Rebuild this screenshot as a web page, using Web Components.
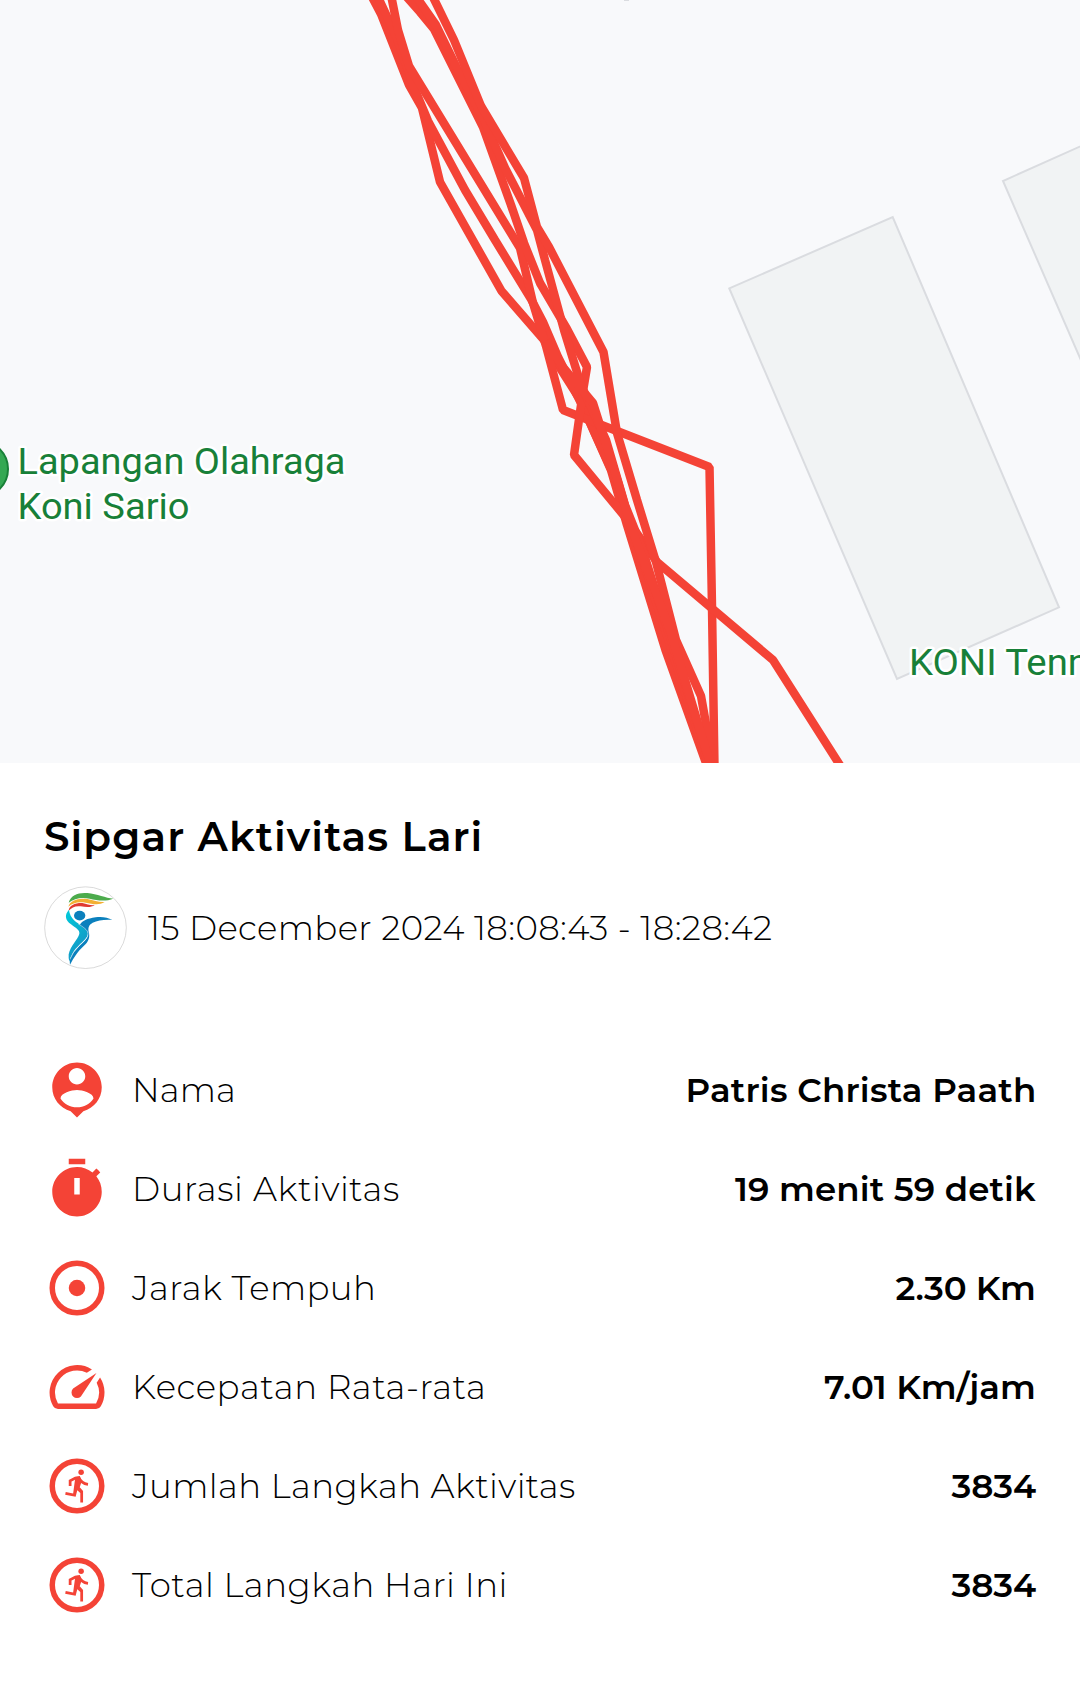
<!DOCTYPE html>
<html lang="id">
<head>
<meta charset="utf-8">
<title>Sipgar Aktivitas Lari</title>
<style>
	body{
		margin: 0;
		background: #fff;
		color: #000;
		font-family: Montserrat, Inter, "Open Sans", sans-serif;
	}
</style>
</head>
<body>
<activity-page></activity-page>

<script>
// One line of text, tracked out to a given ink width
const templateFitText = document.createElement('template');
templateFitText.innerHTML = `
	<style>
		:host{
			display: block;
			flex: none;
			white-space: nowrap;
		}
		span{
			display: inline-block;
		}
	</style>
<span></span>
`;

class FitText extends HTMLElement{
	constructor(){
		super();
		this.attachShadow({mode: 'open'});
		this.shadowRoot.appendChild(templateFitText.content.cloneNode(true));
	}

	connectedCallback(){
		const text = this.getAttribute('text');
		const width = Number(this.getAttribute('width'));
		const span = this.shadowRoot.querySelector('span');
		span.textContent = text;
		const style = getComputedStyle(this);
		const ctx = document.createElement('canvas').getContext('2d');
		ctx.font = `${style.fontWeight} ${style.fontSize} ${style.fontFamily}`;
		const box = ctx.measureText(text);
		const ink = box.actualBoundingBoxLeft + box.actualBoundingBoxRight;
		this.style.width = width + 'px';
		span.style.letterSpacing = (width - ink) / (text.length - 1) + 'px';
		span.style.marginLeft = box.actualBoundingBoxLeft + 'px';
	}
}

window.customElements.define('fit-text', FitText);


const templateRouteMap = document.createElement('template');
templateRouteMap.innerHTML = `
	<style>
		:host{
			display: block;
			height: 763px;
			background: #f8f9fb;
			overflow: hidden;
		}
		svg{
			display: block;
		}
		.building{
			fill: #f1f3f4;
			stroke: #dadce0;
			stroke-width: 2;
		}
		.route{
			fill: none;
			stroke: #f44336;
			stroke-width: 8.5;
			stroke-linejoin: bevel;
		}
		text{
			font: 37.3px Roboto, sans-serif;
			fill: #188038;
			stroke: #fff;
			stroke-width: 5;
			stroke-linejoin: round;
			paint-order: stroke;
		}
	</style>
<svg width="1080" height="763" viewBox="0 0 1080 763">
	<g class="building">
		<path d="M729.3 288.4 892.7 217 1059 607.3 897 679z"/>
		<path d="M1090 142 1003 181 1090 381"/>
	</g>
	<path d="M624 0h5" stroke="#dadce0" stroke-width="2"/>
	<g class="route">
		<path d="M371 -5 381 14 409 85 422 108 440 182 501.5 291 544 340 560 368 579 398 611 470 627 525 665.5 650 706 763"/>
		<path d="M377 -5 397 38 413 85 428 121 465 190 495 240 531 299 543 322 558 357 582 405 616 480 631 524 670 645 708 763"/>
		<path d="M391 -5 398 30 409 66 520 248 533 303 546 346 563 410 709.5 467 712 607 714.5 768"/>
		<path d="M405 -5 420 12 434 29 483 127 511 205 524 243 540 283 567 329 587 367 583 391 574 455 626 518 657 562 773 660 843 770"/>
		<path d="M415 -5 436 25 458 70 484 120 505 168 537 230 545 260 564 330 581 385 606 440 625 505 641 545 671 640 710 763"/>
		<path d="M432 -5 454 40 481 106 524 178 537 227 549 247 603.5 352 617 433 637 500 656 562 676 640 701 696 713 763"/>
		<path d="M546 341 562 366 593 403 618 482 632 530 670 630 706 750 711 763"/>
	</g>
	<circle cx="-20" cy="469" r="28" fill="#34a853" stroke="#188038" stroke-width="2"/>
	<text x="17.500" y="473.5" textLength="328" lengthAdjust="spacingAndGlyphs">Lapangan Olahraga</text>
	<text x="17.500" y="518.5" textLength="172" lengthAdjust="spacingAndGlyphs">Koni Sario</text>
	<text x="909" y="675" textLength="180" lengthAdjust="spacingAndGlyphs">KONI Tenn</text>
</svg>
`;

class RouteMap extends HTMLElement{
	constructor(){
		super();
		this.attachShadow({mode: 'open'});
		this.shadowRoot.appendChild(templateRouteMap.content.cloneNode(true));
	}
}

window.customElements.define('route-map', RouteMap);


const templateSipgarLogo = document.createElement('template');
templateSipgarLogo.innerHTML = `
	<style>
		:host{
			display: block;
			width: 83px;
			height: 83px;
		}
		svg{
			display: block;
		}
	</style>
<svg width="83" height="83" viewBox="5 5 249 249">
	<defs>
		<linearGradient id="cyan" x1="0" y1="0" x2=".5" y2="1">
			<stop offset="0" stop-color="#00cbdc"/>
			<stop offset=".45" stop-color="#08b3cf"/>
			<stop offset="1" stop-color="#1593c6"/>
		</linearGradient>
	</defs>
	<circle cx="129.500" cy="130" r="122.500" fill="#fff" stroke="#b4b4b4" stroke-width="1.500"/>
	<path fill="#4cab4c" d="M79 55C86 31 108 24 135 26C165 29 190 41 213 43C191 52 165 49 142 43C117 38 96 42 79 55z"/>
	<path fill="#f3b033" d="M78 67C83 48 108 40 135 44C155 49 170 54 187 53C170 64 150 59 130 55C108 51 90 56 78 67z"/>
	<path fill="#e03a31" d="M79 79C80 63 100 55 120 56C135 59 145 64 157 62C145 71 130 68 115 66C98 64 88 70 79 79z"/>
	<path fill="url(#cyan)" d="M80 76C66 91 68 107 86 120C102 132 113 138 111 148C107 166 84 183 79 210Q78 222 81 232C86 212 94 198 108 185C123 170 138 160 137 147C135 134 121 128 107 117C91 105 82 94 80 76z"/>
	<path fill="#0b80bd" d="M112 122C120 109 134 103 160 99C180 96 196 100 210 107C186 105 166 109 151 115C139 122 137 130 139 142C144 159 138 173 124 185C105 203 96 218 83 241C80 222 90 206 106 190C126 171 139 161 137 147C133 136 122 130 112 122z"/>
	<path fill="none" stroke="#fff" stroke-width="1.500" d="M107 118C122 128 136 136 137 147C138 161 124 171 107 188Q92 203 84 223"/>
	<ellipse cx="112" cy="94" rx="17" ry="14.500" fill="#0b80bd"/>
</svg>
`;

class SipgarLogo extends HTMLElement{
	constructor(){
		super();
		this.attachShadow({mode: 'open'});
		this.shadowRoot.appendChild(templateSipgarLogo.content.cloneNode(true));
	}
}

window.customElements.define('sipgar-logo', SipgarLogo);


const icons = {
	person: '<path d="M12 2c-4.970 0-9 4.030-9 9 0 4.170 2.840 7.670 6.690 8.690L12 22l2.310-2.310C18.160 18.670 21 15.170 21 11c0-4.970-4.030-9-9-9zm0 2c1.660 0 3 1.340 3 3s-1.340 3-3 3-3-1.340-3-3 1.340-3 3-3zm0 14.300c-2.500 0-4.710-1.280-6-3.220.030-1.990 4-3.080 6-3.080 1.990 0 5.970 1.090 6 3.080-1.290 1.940-3.500 3.220-6 3.220z"/>',
	timer: '<path d="M15 1H9v2h6V1zm4.030 6.390 1.420-1.420c-.430-.510-.9-.990-1.410-1.410l-1.420 1.420C16.070 4.740 14.120 4 12 4c-4.970 0-9 4.030-9 9s4.020 9 9 9 9-4.030 9-9c0-2.120-.740-4.070-1.970-5.610zM13 14h-2V8h2v6z"/>',
	distance: '<circle cx="12" cy="12" r="9" fill="none" stroke="currentColor" stroke-width="2"/><circle cx="12" cy="12" r="3"/>',
	speed: '<path d="m20.380 8.570-1.230 1.850a8 8 0 0 1-.220 7.580H5.070A8 8 0 0 1 15.580 6.850l1.850-1.230A10 10 0 0 0 3.350 19a2 2 0 0 0 1.720 1h13.850a2 2 0 0 0 1.740-1 10 10 0 0 0-.270-10.440zm-9.790 6.840a2 2 0 0 0 2.830 0l5.660-8.490-8.490 5.660a2 2 0 0 0 0 2.830z"/>',
	run: '<circle cx="12" cy="12" r="9" fill="none" stroke="currentColor" stroke-width="2"/><circle cx="13.500" cy="7" r="1"/><path d="M9.500 12V10.100L11.400 9.100 12.700 8.900Q13.500 11.100 16 11.400" fill="none" stroke="currentColor" stroke-width="1"/><path d="m11.400 8.750 1.600-.1.700 1.600-.7 2.200 1.200 1.400V18h-1v-3.500l-1.100-1-.6 2.400-3.800-.7.200-1 2.700.5z"/>'
};

const templateStatRow = document.createElement('template');
templateStatRow.innerHTML = `
	<style>
		:host{
			display: flex;
			align-items: center;
			height: 99px;
			font-size: 34px;
		}
		svg{
			flex: none;
			width: 66px;
			height: 66px;
			color: #f44336;
			fill: currentColor;
		}
		.label{
			margin-left: var(--label-gap, 26px);
			font-weight: 340;
		}
		.value{
			margin-left: auto;
			margin-right: var(--value-gap, 2px);
			font-weight: 570;
		}
	</style>
<svg viewBox="0 0 24 24"></svg>
<fit-text class="label"></fit-text>
<fit-text class="value"></fit-text>
`;

class StatRow extends HTMLElement{
	constructor(){
		super();
		this.attachShadow({mode: 'open'});
		const content = templateStatRow.content.cloneNode(true);
		content.querySelector('svg').innerHTML = icons[this.getAttribute('icon')];
		['label', 'value'].forEach(name => {
			const el = content.querySelector('.' + name);
			el.setAttribute('text', this.getAttribute(name));
			el.setAttribute('width', this.getAttribute(name + '-width'));
		});
		this.shadowRoot.appendChild(content);
	}
}

window.customElements.define('stat-row', StatRow);


const templatePage = document.createElement('template');
templatePage.innerHTML = `
	<style>
		:host{
			display: block;
			width: 1080px;
			height: 1694px;
			overflow: hidden;
		}
		.details{
			padding: 50px 44px 0;
		}
		.title{
			margin-left: 1px;
			font-size: 40.5px;
			font-weight: 590;
			line-height: 48px;
		}
		.when{
			display: flex;
			align-items: center;
			gap: 21px;
			margin-top: 25px;
			font-size: 34px;
			font-weight: 340;
		}
		.when fit-text{
			padding-top: 1px;
		}
		.stats{
			margin-top: 71.5px;
		}
	</style>
<route-map></route-map>
<div class="details">
	<fit-text class="title" text="Sipgar Aktivitas Lari" width="435.5"></fit-text>
	<div class="when">
		<sipgar-logo></sipgar-logo>
		<fit-text text="15 December 2024 18:08:43 - 18:28:42" width="623"></fit-text>
	</div>
	<div class="stats">
		<stat-row icon="person" label="Nama" label-width="97" value="Patris Christa Paath" value-width="345.5"></stat-row>
		<stat-row icon="timer" label="Durasi Aktivitas" label-width="263" value="19 menit 59 detik" value-width="301" style="--value-gap: 0px"></stat-row>
		<stat-row icon="distance" label="Jarak Tempuh" label-width="242" value="2.30 Km" value-width="138.5" style="--label-gap: 21px"></stat-row>
		<stat-row icon="speed" label="Kecepatan Rata-rata" label-width="347" value="7.01 Km/jam" value-width="210"></stat-row>
		<stat-row icon="run" label="Jumlah Langkah Aktivitas" label-width="444" value="3834" value-width="84.5" style="--label-gap: 21px; --value-gap: 0px"></stat-row>
		<stat-row icon="run" label="Total Langkah Hari Ini" label-width="372.5" value="3834" value-width="84.5" style="--label-gap: 22px; --value-gap: 0px"></stat-row>
	</div>
</div>
`;

class ActivityPage extends HTMLElement{
	constructor(){
		super();
		this.attachShadow({mode: 'open'});
		this.shadowRoot.appendChild(templatePage.content.cloneNode(true));
	}
}

window.customElements.define('activity-page', ActivityPage);
</script>
</body>
</html>
